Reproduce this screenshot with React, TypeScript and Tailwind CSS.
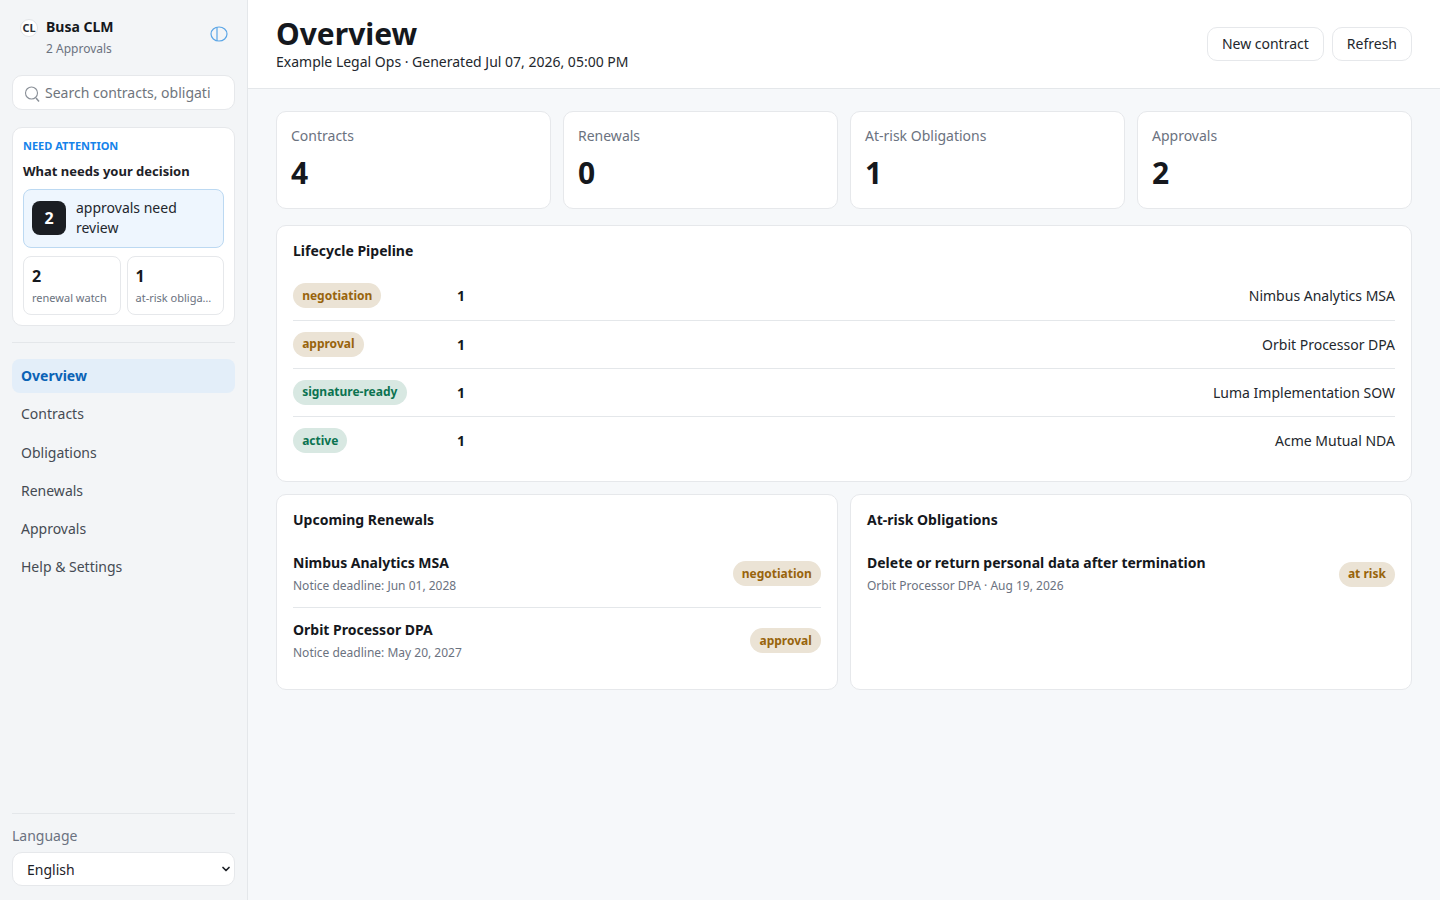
import React from "react";
import { ChevronDown } from "lucide-react";

const stats = [
  { label: "Contracts", value: "4" },
  { label: "Renewals", value: "0" },
  { label: "At-risk Obligations", value: "1" },
  { label: "Approvals", value: "2" },
];

const amber = "bg-[#ebe3d5] text-[#98640c]";
const green = "bg-[#d8e8e2] text-[#0b7350]";

const pipeline = [
  { stage: "negotiation", tone: amber, count: 1, name: "Nimbus Analytics MSA" },
  { stage: "approval", tone: amber, count: 1, name: "Orbit Processor DPA" },
  { stage: "signature-ready", tone: green, count: 1, name: "Luma Implementation SOW" },
  { stage: "active", tone: green, count: 1, name: "Acme Mutual NDA" },
];

const nav = ["Overview", "Contracts", "Obligations", "Renewals", "Approvals", "Help & Settings"];

function Pill({ label, tone, className = "" }: { label: string; tone: string; className?: string }) {
  return (
    <span className={`inline-flex h-[25px] items-center rounded-full px-[9.15px] text-[12px] font-bold ${tone} ${className}`}>
      {label}
    </span>
  );
}

function Sidebar() {
  return (
    <aside className="flex h-[900px] w-[248px] shrink-0 flex-col border-r border-[#e4e7ea] bg-[#f3f5f7] px-3">
      <div className="flex h-[75px] items-start pt-[17px]">
        <div className="mt-[2px] ml-2 flex h-[18px] w-[18px] shrink-0 items-center justify-center rounded-full border border-[#e2e5e8] bg-white pt-[1px] text-[11px] font-bold text-[#2b2f35]">
          CL
        </div>
        <div className="ml-2 flex-1">
          <div className="text-[14px] leading-[20px] font-bold text-[#15181d]">Busa CLM</div>
          <div className="mt-[2px] text-[12px] leading-[20px] text-[#6b7280]">2 Approvals</div>
        </div>
        <svg className="mt-[9px] mr-[7px]" width="18" height="16" viewBox="0 0 18 16" fill="none" stroke="#5aa5e6" strokeWidth="1.2">
          <ellipse cx="9" cy="8" rx="8" ry="7" />
          <path d="M7 1.2v13.6" />
        </svg>
      </div>
      <div className="flex h-[35px] items-center overflow-hidden rounded-[10px] border border-[#e6e8eb] bg-white pr-6 pl-[11px]">
        <svg className="mt-[2px] shrink-0" width="16" height="18" viewBox="0 0 16 18" fill="none" stroke="#8a9098" strokeWidth="1.1">
          <circle cx="7.5" cy="8" r="6" />
          <path d="M12 13l3 3.5" strokeWidth="1.5" />
        </svg>
        <span className="ml-[5px] overflow-hidden text-[14px] whitespace-nowrap text-[#6f757d]">Search contracts, obligati</span>
      </div>
      <div className="mt-[17px] rounded-[10px] border border-[#e6e8eb] bg-white px-[10px] pt-[10px] pb-[10px]">
        <div className="text-[11px] leading-[16px] font-bold text-[#1583ea]">NEED ATTENTION</div>
        <div className="mt-[8px] text-[13px] leading-[18px] font-bold text-[#1d2127]">What needs your decision</div>
        <div className="mt-[9px] flex h-[59px] items-center gap-[10px] rounded-[8px] border border-[#bcd9f2] bg-[#eef6fe] px-2 pb-[1px]">
          <div className="flex h-[34px] w-[34px] shrink-0 items-center justify-center rounded-[8px] bg-[#1b1e23] text-[16px] font-bold text-white">2</div>
          <div className="text-[14px] leading-[19.6px] text-[#23272d]">approvals need review</div>
        </div>
        <div className="mt-2 grid grid-cols-2 gap-[6px]">
          {[
            { n: "2", t: "renewal watch" },
            { n: "1", t: "at-risk obliga…" },
          ].map((c) => (
            <div key={c.t} className="h-[59px] min-w-0 rounded-[8px] border border-[#e6e8eb] bg-white px-2 pt-[8px]">
              <div className="text-[16px] leading-[22px] font-bold text-[#15181d]">{c.n}</div>
              <div className="mt-[3px] text-[11px] leading-[16px] whitespace-nowrap text-[#6b7280]">{c.t}</div>
            </div>
          ))}
        </div>
      </div>
      <div className="mt-[16px] border-t border-[#e4e7ea] pt-[16px]">
        {nav.map((item, i) => (
          <div
            key={item}
            className={`mb-[4.3px] flex h-[34px] items-center rounded-[8px] px-[9px] pb-[1px] text-[14px] ${
              i === 0 ? "bg-[#e3eef9] font-bold text-[#0b63b6]" : "text-[#454b53]"
            }`}
          >
            {item}
          </div>
        ))}
      </div>
      <div className="mt-auto mb-[14px] border-t border-[#e4e7ea] pt-[12px]">
        <div className="text-[14px] leading-[20px] text-[#6b7280]">Language</div>
        <div className="mt-[6px] flex h-[34px] items-center justify-between rounded-[10px] border border-[#e6e8eb] bg-white pr-[2px] pl-[14px] text-[14px] text-[#1d2127]">
          English
          <ChevronDown size={12} strokeWidth={3.5} className="text-[#1d2127]" />
        </div>
      </div>
    </aside>
  );
}

export default function App() {
  return (
    <div className="flex min-h-[900px] bg-[#f6f8fa] font-['Noto_Sans',sans-serif] text-[#15181d]">
      <Sidebar />
      <main className="min-w-0 flex-1">
        <header className="flex h-[89px] items-center justify-between border-b border-[#e4e7ea] bg-white px-[28px]">
          <div>
            <h1 className="text-[30px] leading-[36px] font-bold">Overview</h1>
            <div className="text-[14px] leading-[20px] text-[#23272d]">Example Legal Ops · Generated Jul 07, 2026, 05:00 PM</div>
          </div>
          <div className="flex gap-2">
            <button className="h-[34px] rounded-[10px] border border-[#e6e8eb] bg-white px-[14px] pb-[2px] text-[14px] text-[#23272d]">New contract</button>
            <button className="h-[34px] rounded-[10px] border border-[#e6e8eb] bg-white px-[14px] pb-[2px] text-[14px] text-[#23272d]">Refresh</button>
          </div>
        </header>
        <div className="px-[28px] pt-[22px]">
          <div className="grid grid-cols-4 gap-3">
            {stats.map((s) => (
              <div key={s.label} className="h-[98px] rounded-[10px] border border-[#e6e8eb] bg-white px-[14px] pt-[14px]">
                <div className="text-[14px] leading-[20px] text-[#6b7280]">{s.label}</div>
                <div className="mt-[9px] text-[30px] leading-[36px] font-bold">{s.value}</div>
              </div>
            ))}
          </div>
          <section className="mt-4 h-[257px] rounded-[10px] border border-[#e6e8eb] bg-white px-4 pt-[15px]">
            <h2 className="text-[14px] leading-[20px] font-bold">Lifecycle Pipeline</h2>
            <div className="mt-[11.8px]">
              {pipeline.map((p, i) => (
                <div key={p.stage} className={`flex h-[48.2px] items-center pb-[1px] text-[14px] ${i < 3 ? "border-b border-[#e4e7ea]" : ""}`}>
                  <div className="w-[164px]">
                    <Pill label={p.stage} tone={p.tone} />
                  </div>
                  <div className="flex-1 text-[14px] font-bold">{p.count}</div>
                  <div className="text-[#23272d]">{p.name}</div>
                </div>
              ))}
            </div>
          </section>
          <div className="mt-3 grid grid-cols-2 gap-3">
            <section className="h-[196px] rounded-[10px] border border-[#e6e8eb] bg-white px-4 pt-[15px]">
              <h2 className="text-[14px] leading-[20px] font-bold">Upcoming Renewals</h2>
              <div className="mt-[11px]">
                <div className="flex h-[67px] items-center justify-between border-b border-[#e4e7ea]">
                  <div>
                    <div className="text-[14px] leading-[20px] font-bold">Nimbus Analytics MSA</div>
                    <div className="mt-[3px] text-[12px] leading-[20px] text-[#6b7280]">Notice deadline: Jun 01, 2028</div>
                  </div>
                  <Pill label="negotiation" tone={amber} className="mb-[1px]" />
                </div>
                <div className="flex h-[67px] items-center justify-between">
                  <div>
                    <div className="text-[14px] leading-[20px] font-bold">Orbit Processor DPA</div>
                    <div className="mt-[3px] text-[12px] leading-[20px] text-[#6b7280]">Notice deadline: May 20, 2027</div>
                  </div>
                  <Pill label="approval" tone={amber} className="mb-[2px]" />
                </div>
              </div>
            </section>
            <section className="h-[196px] rounded-[10px] border border-[#e6e8eb] bg-white px-4 pt-[15px]">
              <h2 className="text-[14px] leading-[20px] font-bold">At-risk Obligations</h2>
              <div className="mt-[11px] flex h-[67px] items-center justify-between">
                <div>
                  <div className="text-[14px] leading-[20px] font-bold">Delete or return personal data after termination</div>
                  <div className="mt-[3px] text-[12px] leading-[20px] text-[#6b7280]">Orbit Processor DPA · Aug 19, 2026</div>
                </div>
                <Pill label="at risk" tone={amber} className="mb-[1px]" />
              </div>
            </section>
          </div>
        </div>
      </main>
    </div>
  );
}
